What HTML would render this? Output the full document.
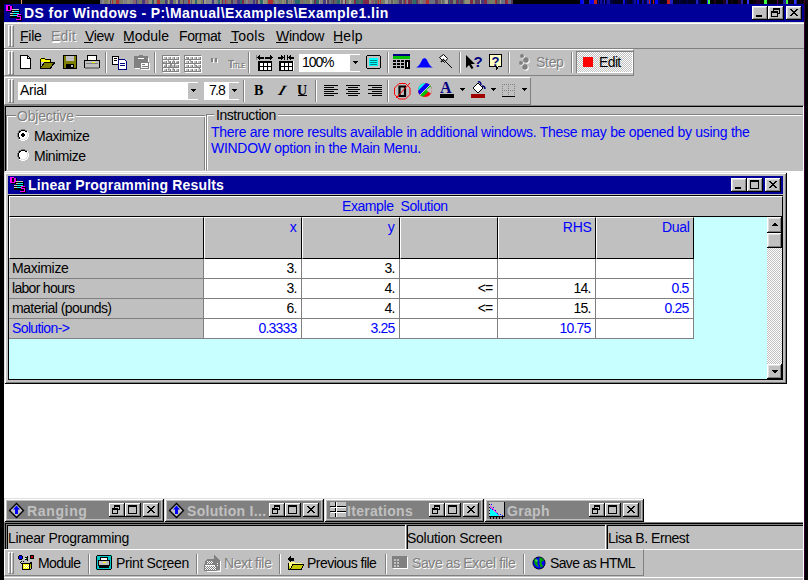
<!DOCTYPE html>
<html><head><meta charset="utf-8">
<style>
*{margin:0;padding:0;box-sizing:border-box}
html,body{width:808px;height:580px;overflow:hidden;background:#000}
body{position:relative;font-family:"Liberation Sans",sans-serif;font-size:13px;color:#000}
.a{position:absolute}
.t{position:absolute;white-space:pre;line-height:13px}
.g{background:#c0c0c0}
.btn{background:#c0c0c0;box-shadow:inset -1px -1px #000,inset 1px 1px #fff,inset -2px -2px #808080,inset 2px 2px #dfdfdf}
.grip{position:absolute;width:3px;border:1px solid;border-color:#fff #808080 #808080 #fff}
.grip::after{content:'';position:absolute;left:2px;top:-1px;bottom:-1px;width:3px;border:1px solid;border-color:#fff #808080 #808080 #fff;box-sizing:border-box}
.m{letter-spacing:0.5px}
.dis{color:#808080;text-shadow:1px 1px #fff}
.ch{position:absolute;top:217px;width:98px;height:42px;background:#c0c0c0;border-top:1px solid #fff;border-left:1px solid #fff;border-bottom:1px solid #000;border-right:1px solid #000}
.gt{position:absolute;white-space:pre;line-height:14px;font-size:14px;letter-spacing:-0.4px}
.gr{position:absolute;white-space:pre;line-height:14px;font-size:14px;letter-spacing:-0.8px;width:92.5px;text-align:right}
.mw{position:absolute;top:498px;width:160px;height:24px;background:#808080;box-shadow:inset 1px 1px #dfdfdf,inset -1px -1px #000,inset 2px 2px #fff,inset -2px -2px #808080,inset 3px 3px #c0c0c0,inset -3px -3px #c0c0c0}
.mt{color:#c0c0c0;font-weight:bold;font-size:14px;letter-spacing:0.3px}
.sp{position:absolute;top:524px;height:26px;border-top:1px solid #808080;border-left:1px solid #808080;border-bottom:1px solid #fff;border-right:1px solid #fff;box-shadow:inset 1px 1px #000}
</style></head><body>
<!-- noise strip -->
<div class="a" id="noise" style="left:100px;top:0;width:708px;height:4px;background:linear-gradient(90deg,#6a7080 0px 2px,#8a8a8a 2px 4px,#7a7a62 4px 5px,#7a7a62 5px 8px,#909078 8px 10px,#5a3a5a 10px 11px,#808080 11px 12px,#b03030 12px 13px,#7a7a62 13px 15px,#7a7a62 15px 16px,#b03030 16px 19px,#886070 19px 20px,#7a7a62 20px 23px,#8a8a8a 23px 24px,#808080 24px 27px,#909078 27px 30px,#808080 30px 32px,#808080 32px 33px,#886070 33px 36px,#483880 36px 37px,#6a7080 37px 39px,#7a7a62 39px 42px,#483880 42px 45px,#886070 45px 48px,#7a7a62 48px 49px,#909078 49px 52px,#2a6a6a 52px 53px,#5a3a5a 53px 54px,#909078 54px 55px,#909078 55px 56px,#70806a 56px 57px,#b03030 57px 60px,#70806a 60px 62px,#70806a 62px 65px,#483880 65px 67px,#606060 67px 68px,#a0a090 68px 69px,#7a7a62 69px 70px,#483880 70px 73px,#70806a 73px 76px,#a0a090 76px 78px,#483880 78px 80px,#7a7a62 80px 83px,#5a3a5a 83px 84px,#6a7080 84px 86px,#6a7080 86px 88px,#b03030 88px 90px,#8a8a8a 90px 91px,#606060 91px 92px,#909078 92px 95px,#2a6a6a 95px 97px,#909078 97px 99px,#909078 99px 101px,#7a7a62 101px 103px,#483880 103px 104px,#a0a090 104px 106px,#808080 106px 107px,#8a8a8a 107px 109px,#8a8a8a 109px 112px,#483880 112px 114px,#8a8a8a 114px 116px,#808080 116px 118px,#2a6a6a 118px 120px,#909078 120px 121px,#70806a 121px 122px,#802848 122px 123px,#6a7080 123px 125px,#b03030 125px 126px,#886070 126px 128px,#7a7a62 128px 130px,#70806a 130px 131px,#5a3a5a 131px 133px,#6a7080 133px 135px,#886070 135px 137px,#483880 137px 140px,#2a6a6a 140px 142px,#802848 142px 144px,#7a7a62 144px 145px,#6a7080 145px 146px,#8a8a8a 146px 147px,#808080 147px 148px,#886070 148px 150px,#6a7080 150px 153px,#483880 153px 155px,#6a7080 155px 156px,#5a3a5a 156px 158px,#909078 158px 160px,#2a6a6a 160px 163px,#a0a090 163px 164px,#909078 164px 167px,#70806a 167px 168px,#b03030 168px 171px,#b03030 171px 173px,#7a7a62 173px 175px,#8a8a8a 175px 177px,#808080 177px 179px,#7a7a62 179px 180px,#70806a 180px 181px,#7a7a62 181px 182px,#909078 182px 184px,#7a7a62 184px 185px,#909078 185px 186px,#5a3a5a 186px 187px,#2a6a6a 187px 188px,#808080 188px 191px,#886070 191px 192px,#909078 192px 193px,#6a7080 193px 195px,#2a6a6a 195px 197px,#2a6a6a 197px 200px,#7a7a62 200px 202px,#886070 202px 203px,#70806a 203px 205px,#70806a 205px 207px,#7a7a62 207px 209px,#7a7a62 209px 210px,#a0a090 210px 212px,#70806a 212px 214px,#5a3a5a 214px 215px,#802848 215px 216px,#2a6a6a 216px 219px,#a0a090 219px 220px,#808080 220px 223px,#483880 223px 226px,#a0a090 226px 227px,#5a3a5a 227px 229px,#6a7080 229px 231px,#606060 231px 233px,#5a3a5a 233px 234px,#606060 234px 237px,#2a6a6a 237px 240px,#909078 240px 241px,#606060 241px 242px,#886070 242px 243px,#a0a090 243px 245px,#802848 245px 246px,#70806a 246px 249px,#a0a090 249px 251px,#808080 251px 252px,#70806a 252px 254px,#802848 254px 256px,#2a6a6a 256px 259px,#606060 259px 261px,#2a6a6a 261px 263px,#802848 263px 264px,#802848 264px 265px,#802848 265px 267px,#802848 267px 269px,#909078 269px 271px,#886070 271px 274px,#70806a 274px 275px,#606060 275px 277px,#886070 277px 278px,#b03030 278px 279px,#70806a 279px 280px,#b03030 280px 281px,#7a7a62 281px 283px,#70806a 283px 285px,#a0a090 285px 287px,#a0a090 287px 288px,#6a7080 288px 289px,#808080 289px 290px,#909078 290px 291px,#606060 291px 293px,#909078 293px 294px,#70806a 294px 297px,#6a7080 297px 299px,#5a3a5a 299px 302px,#808080 302px 303px,#606060 303px 304px,#5a3a5a 304px 305px,#b03030 305px 306px,#886070 306px 307px,#808080 307px 308px,#802848 308px 310px,#5a3a5a 310px 312px,#606060 312px 313px,#2a6a6a 313px 316px,#5a3a5a 316px 318px,#886070 318px 320px,#808080 320px 321px,#70806a 321px 323px,#886070 323px 326px,#b03030 326px 329px,#6a7080 329px 332px,#6a7080 332px 335px,#5a3a5a 335px 338px,#886070 338px 339px,#606060 339px 341px,#909078 341px 342px,#606060 342px 343px,#6a7080 343px 344px,#70806a 344px 345px,#a0a090 345px 348px,#5a3a5a 348px 349px,#2a6a6a 349px 350px,#5a3a5a 350px 353px,#70806a 353px 356px,#5a3a5a 356px 357px,#802848 357px 358px,#483880 358px 359px,#606060 359px 360px,#5a3a5a 360px 361px,#5a3a5a 361px 363px,#606060 363px 364px,#70806a 364px 365px,#909078 365px 367px,#909078 367px 370px,#802848 370px 373px,#70806a 373px 375px,#5a3a5a 375px 378px,#5a3a5a 378px 380px,#a0a090 380px 381px,#483880 381px 384px,#802848 384px 387px,#6a7080 387px 389px,#7a7a62 389px 391px,#70806a 391px 393px,#7a7a62 393px 395px,#b03030 395px 396px,#802848 396px 397px,#606060 397px 399px,#606060 399px 400px,#a0a090 400px 401px,#6a7080 401px 403px,#6a7080 403px 405px,#802848 405px 407px,#b03030 407px 408px,#6a7080 408px 410px,#6a7080 410px 411px,#5a3a5a 411px 413px,#000000 413px 415px,#000000 415px 417px,#000000 417px 419px,#000000 419px 420px,#000000 420px 422px,#000000 422px 424px,#000000 424px 425px,#000000 425px 427px,#000000 427px 428px,#000000 428px 430px,#000000 430px 433px,#000000 433px 435px,#000000 435px 437px,#000000 437px 438px,#000000 438px 440px,#000000 440px 442px,#000000 442px 445px,#000000 445px 448px,#000000 448px 450px,#000000 450px 453px,#000000 453px 454px,#000000 454px 455px,#000000 455px 456px,#000000 456px 457px,#000000 457px 458px,#000000 458px 460px,#000000 460px 462px,#000000 462px 463px,#000000 463px 464px,#000000 464px 466px,#000000 466px 467px,#000000 467px 469px,#000000 469px 471px,#000000 471px 473px,#000000 473px 474px,#000000 474px 477px,#000000 477px 480px,#0000ff 480px 483px,#2020c0 483px 484px,#000030 484px 485px,#000020 485px 487px,#000020 487px 488px,#000020 488px 489px,#2020c0 489px 490px,#0000ff 490px 491px,#0000ff 491px 494px,#c02020 494px 497px,#000020 497px 498px,#1010a0 498px 499px,#000020 499px 500px,#1010a0 500px 502px,#000060 502px 504px,#2020c0 504px 505px,#000020 505px 506px,#000060 506px 507px,#1010a0 507px 510px,#000040 510px 513px,#000020 513px 514px,#000020 514px 516px,#000020 516px 519px,#000020 519px 521px,#000020 521px 523px,#2020c0 523px 524px,#0000ff 524px 525px,#000020 525px 526px,#000060 526px 527px,#000030 527px 529px,#000020 529px 530px,#000020 530px 532px,#000060 532px 534px,#1010a0 534px 536px,#000030 536px 537px,#0000ff 537px 539px,#000030 539px 542px,#1010a0 542px 544px,#000030 544px 545px,#000060 545px 547px,#2020c0 547px 548px,#2020c0 548px 549px,#c02020 549px 550px,#0000ff 550px 551px,#000020 551px 553px,#c02020 553px 554px,#000020 554px 555px,#0000ff 555px 558px,#000060 558px 560px,#000020 560px 563px,#000020 563px 564px,#000020 564px 567px,#c02020 567px 570px,#2020c0 570px 573px,#000020 573px 574px,#000020 574px 577px,#000030 577px 578px,#000020 578px 579px,#000040 579px 580px,#000030 580px 583px,#000020 583px 586px,#000040 586px 588px,#000020 588px 589px,#000020 589px 592px,#000020 592px 593px,#000020 593px 594px,#000030 594px 596px,#2020c0 596px 598px,#000060 598px 599px,#000040 599px 601px,#000000 601px 602px,#000000 602px 604px,#000000 604px 607px,#3030ff 607px 608px,#40ff40 608px 610px,#000000 610px 613px,#000000 613px 614px,#200020 614px 616px,#000000 616px 617px,#000000 617px 619px,#000000 619px 621px,#000000 621px 623px,#200020 623px 626px,#2020a0 626px 628px,#000000 628px 629px,#000000 629px 631px,#100010 631px 633px,#000000 633px 634px,#000000 634px 635px,#000000 635px 637px,#000000 637px 638px,#200020 638px 641px,#2020a0 641px 643px,#000000 643px 645px,#000000 645px 647px,#3030ff 647px 649px,#000000 649px 651px,#000000 651px 652px,#000000 652px 653px,#100010 653px 655px,#000000 655px 656px,#200020 656px 658px,#200020 658px 660px,#000000 660px 662px,#000000 662px 664px,#40ff40 664px 666px,#40ff40 666px 667px,#000000 667px 669px,#000000 669px 670px,#000000 670px 672px,#000000 672px 674px,#000000 674px 677px,#500050 677px 678px,#000000 678px 680px,#000000 680px 681px,#000000 681px 683px,#2020a0 683px 686px,#40ff40 686px 688px,#000000 688px 690px,#100010 690px 692px,#000000 692px 694px,#3030ff 694px 696px,#2020a0 696px 697px,#000000 697px 700px,#100010 700px 702px,#000000 702px 703px,#100010 703px 706px,#100010 706px 708px)"></div>
<div class="a" style="left:21px;top:0;width:1px;height:4px;background:#e0a070"></div>
<div class="a" style="left:4px;top:4px;width:800px;height:576px;background:#c0c0c0"></div>
<!-- title bar -->
<div class="a" style="left:4px;top:4px;width:800px;height:18px;background:#000098"></div>
<div class="a" style="left:4px;top:22px;width:800px;height:1px;background:#dfdfdf"></div>
<div class="t" style="left:24px;top:7px;color:#fff;font-weight:bold;font-size:14px;letter-spacing:0.42px">DS for Windows - P:\Manual\Examples\Example1.lin</div>
<!-- title icon -->
<svg class="a" style="left:5px;top:4px" width="18" height="18" viewBox="0 0 18 18" shape-rendering="crispEdges">
<g fill="#000"><rect x="2" y="2" width="6" height="6"/><rect x="8" y="6" width="7" height="2"/><rect x="7" y="8" width="8" height="2"/><rect x="5" y="10" width="10" height="2"/><rect x="5" y="12" width="8" height="2"/><rect x="12" y="11" width="5" height="6"/></g>
<g fill="#ff00ff"><rect x="1" y="1" width="4" height="1"/><rect x="1" y="1" width="2" height="6"/><rect x="1" y="6" width="5" height="1"/><rect x="5" y="2" width="2" height="4"/></g>
<g fill="#c8c8b8"><rect x="7" y="5" width="7" height="1"/><rect x="7" y="7" width="2" height="1"/><rect x="5" y="9" width="3" height="1"/><rect x="5" y="11" width="3" height="1"/></g>
<g fill="#00ffff"><rect x="9" y="7" width="5" height="1"/><rect x="8" y="9" width="6" height="1"/><rect x="8" y="11" width="4" height="1"/></g>
<g fill="#ff00ff"><rect x="12" y="10" width="4" height="1"/><rect x="12" y="10" width="1" height="3"/><rect x="12" y="12" width="4" height="1"/><rect x="15" y="12" width="1" height="4"/><rect x="11" y="15" width="5" height="1"/></g>
</svg>
<!-- title buttons -->
<div class="a btn" style="left:752px;top:6px;width:16px;height:14px"><div class="a" style="left:4px;top:9px;width:6px;height:2px;background:#000"></div></div>
<div class="a btn" style="left:768px;top:6px;width:16px;height:14px">
 <div class="a" style="left:5px;top:2px;width:7px;height:6px;border:1px solid #000;border-top-width:2px"></div>
 <div class="a" style="left:3px;top:5px;width:7px;height:6px;border:1px solid #000;border-top-width:2px;background:#c0c0c0"></div>
</div>
<div class="a btn" style="left:786px;top:6px;width:16px;height:14px">
 <svg class="a" style="left:4px;top:3px" width="8" height="7" viewBox="0 0 8 7" shape-rendering="crispEdges"><path fill="#000" d="M0 0h2v1h1v1h2v-1h1v-1h2v1h-1v1h-1v1h-1v1h1v1h1v1h1v1h-2v-1h-1v-1h-2v1h-1v1h-2v-1h1v-1h1v-1h1v-1h-1v-1h-1v-1h-1z"/></svg>
</div>
<div class="a" style="left:4px;top:22px;width:800px;height:1px;background:#dfdfdf"></div>
<!-- menu bar -->
<div class="a" style="left:4px;top:23px;width:800px;height:1px;background:#fff"></div>
<div class="a" style="left:4px;top:23px;width:1px;height:25px;background:#fff"></div>
<div class="a" style="left:4px;top:48px;width:800px;height:1px;background:#808080"></div>
<div class="grip" style="left:8px;top:25px;height:22px"></div>
<div class="t" style="left:20px;top:29px;font-size:14px;line-height:14px;letter-spacing:-0.22px">File</div>
<div class="t dis" style="left:51px;top:29px;font-size:14px;line-height:14px;letter-spacing:0.25px">Edit</div>
<div class="t" style="left:85px;top:29px;font-size:14px;line-height:14px;letter-spacing:-0.29px">View</div>
<div class="t" style="left:123px;top:29px;font-size:14px;line-height:14px;letter-spacing:0px">Module</div>
<div class="t" style="left:179px;top:29px;font-size:14px;line-height:14px;letter-spacing:-0.42px">Format</div>
<div class="t" style="left:231px;top:29px;font-size:14px;line-height:14px;letter-spacing:0.25px">Tools</div>
<div class="t" style="left:276px;top:29px;font-size:14px;line-height:14px;letter-spacing:-0.31px">Window</div>
<div class="t" style="left:333px;top:29px;font-size:14px;line-height:14px;letter-spacing:0.25px">Help</div>
<!-- underlines -->
<div class="a" style="left:20px;top:42px;width:8px;height:1px;background:#000"></div>
<div class="a" style="left:52px;top:42px;width:8px;height:1px;background:#fff"></div>
<div class="a" style="left:84px;top:42px;width:9px;height:1px;background:#000"></div>
<div class="a" style="left:124px;top:42px;width:11px;height:1px;background:#000"></div>
<div class="a" style="left:197px;top:42px;width:5px;height:1px;background:#000"></div>
<div class="a" style="left:230px;top:42px;width:8px;height:1px;background:#000"></div>
<div class="a" style="left:276px;top:42px;width:12px;height:1px;background:#000"></div>
<div class="a" style="left:334px;top:42px;width:9px;height:1px;background:#000"></div>
<!-- toolbar 1 -->
<div class="a" style="left:4px;top:49px;width:630px;height:27px;border-top:1px solid #fff;border-left:1px solid #fff;border-right:1px solid #808080;border-bottom:1px solid #808080"></div>
<div class="grip" style="left:8px;top:51px;height:24px"></div>
<svg class="a" style="left:0;top:49px" width="640" height="27" viewBox="0 49 640 27" shape-rendering="crispEdges">
 <!-- new -->
 <path d="M20.5 55.5h7l3 3v9.5h-10z" fill="#fff" stroke="#000"/>
 <path d="M27.5 55.5v3h3" fill="none" stroke="#000"/>
 <!-- open -->
 <path d="M40 58h5l1 1h5v3h-11z" fill="#ffff00" stroke="#000" stroke-width="0"/>
 <path d="M40.5 58.5h4l1 1h5v2.5" fill="none" stroke="#000"/>
 <path d="M40.5 58.5v9.5h10l4.5-6h-10l-4.5 6" fill="#808000" stroke="#000"/>
 <!-- save -->
 <rect x="63.5" y="55.5" width="13" height="13" fill="#808000" stroke="#000"/>
 <rect x="66" y="56" width="8" height="5" fill="#c0c0c0"/>
 <rect x="66" y="64" width="8" height="4" fill="#000"/>
 <rect x="71" y="65" width="2" height="2" fill="#c0c0c0"/>
 <!-- print -->
 <path d="M87.5 55.5h9v5h-9z" fill="#fff" stroke="#000"/>
 <path d="M84.5 60.5h15v7h-15z" fill="#c0c0c0" stroke="#000"/>
 <rect x="86" y="63" width="12" height="1" fill="#808080"/>
 <rect x="92" y="62" width="3" height="1" fill="#ffff00"/>
 <rect x="85" y="67" width="14" height="2" fill="#808080"/>
 <!-- sep -->
 <rect x="105" y="52" width="1" height="21" fill="#808080"/><rect x="106" y="52" width="1" height="21" fill="#fff"/>
 <!-- copy -->
 <path d="M112.5 56.5h6v8h-6z" fill="#fff" stroke="#000"/>
 <rect x="114" y="58" width="3" height="1" fill="#000"/><rect x="114" y="60" width="3" height="1" fill="#000"/>
 <path d="M118.5 59.5h6l2 2v7.5h-8z" fill="#fff" stroke="#000080"/>
 <rect x="120" y="63" width="5" height="1" fill="#000080"/><rect x="120" y="65" width="5" height="1" fill="#000080"/>
 <!-- paste disabled -->
 <rect x="134" y="56" width="14" height="12" fill="#808080"/>
 <rect x="139" y="55" width="4" height="1" fill="#808080"/>
 <rect x="138" y="58" width="6" height="1" fill="#fff"/>
 <rect x="148" y="58" width="1" height="4" fill="#fff"/><rect x="135" y="68" width="5" height="1" fill="#fff"/>
 <rect x="140" y="62" width="9" height="7" fill="#808080"/>
 <rect x="141" y="63" width="7" height="5" fill="#fff"/>
 <rect x="142" y="64" width="3" height="1" fill="#808080"/><rect x="142" y="66" width="6" height="1" fill="#808080"/>
 <rect x="149" y="63" width="1" height="7" fill="#fff"/><rect x="141" y="69" width="9" height="1" fill="#fff"/>
 <!-- sep -->
 <rect x="154" y="52" width="1" height="21" fill="#808080"/><rect x="155" y="52" width="1" height="21" fill="#fff"/>
 <!-- grid dis -->
 <g><rect x="162" y="55" width="1" height="16" fill="#808080"/><rect x="163" y="56" width="1" height="16" fill="#fff"/><rect x="166" y="55" width="1" height="16" fill="#808080"/><rect x="167" y="56" width="1" height="16" fill="#fff"/><rect x="170" y="55" width="1" height="16" fill="#808080"/><rect x="171" y="56" width="1" height="16" fill="#fff"/><rect x="174" y="55" width="1" height="16" fill="#808080"/><rect x="175" y="56" width="1" height="16" fill="#fff"/><rect x="178" y="55" width="1" height="16" fill="#808080"/><rect x="179" y="56" width="1" height="16" fill="#fff"/><rect x="162" y="55" width="17" height="1" fill="#808080"/><rect x="163" y="56" width="17" height="1" fill="#fff"/><rect x="162" y="59" width="17" height="1" fill="#808080"/><rect x="163" y="60" width="17" height="1" fill="#fff"/><rect x="162" y="63" width="17" height="1" fill="#808080"/><rect x="163" y="64" width="17" height="1" fill="#fff"/><rect x="162" y="67" width="17" height="1" fill="#808080"/><rect x="163" y="68" width="17" height="1" fill="#fff"/><rect x="162" y="71" width="17" height="1" fill="#808080"/><rect x="163" y="72" width="17" height="1" fill="#fff"/><rect x="184" y="55" width="1" height="16" fill="#808080"/><rect x="185" y="56" width="1" height="16" fill="#fff"/><rect x="188" y="55" width="1" height="16" fill="#808080"/><rect x="189" y="56" width="1" height="16" fill="#fff"/><rect x="192" y="55" width="1" height="16" fill="#808080"/><rect x="193" y="56" width="1" height="16" fill="#fff"/><rect x="196" y="55" width="1" height="16" fill="#808080"/><rect x="197" y="56" width="1" height="16" fill="#fff"/><rect x="200" y="55" width="1" height="16" fill="#808080"/><rect x="201" y="56" width="1" height="16" fill="#fff"/><rect x="184" y="55" width="17" height="1" fill="#808080"/><rect x="185" y="56" width="17" height="1" fill="#fff"/><rect x="184" y="59" width="17" height="1" fill="#808080"/><rect x="185" y="60" width="17" height="1" fill="#fff"/><rect x="184" y="63" width="17" height="1" fill="#808080"/><rect x="185" y="64" width="17" height="1" fill="#fff"/><rect x="184" y="67" width="17" height="1" fill="#808080"/><rect x="185" y="68" width="17" height="1" fill="#fff"/><rect x="184" y="71" width="17" height="1" fill="#808080"/><rect x="185" y="72" width="17" height="1" fill="#fff"/><path d="M163 62l4 3-4 3M178 62l-4 3 4 3M168 60l3 5 3-5M168 70l3-5 3 5" stroke="#808080" fill="none" shape-rendering="auto"/><path d="M186 57l14 12" stroke="#808080" fill="none" shape-rendering="auto"/></g>
 <!-- quotes -->
 <g fill="#808080"><rect x="211" y="58" width="2" height="4"/><rect x="215" y="58" width="2" height="4"/></g>
 <g fill="#fff"><rect x="213" y="59" width="1" height="4"/><rect x="217" y="59" width="1" height="4"/></g>
 
 <text x="229" y="69" font-family="Liberation Sans" font-weight="bold" font-size="10" fill="#fff" textLength="6" lengthAdjust="spacingAndGlyphs">T</text><text x="234" y="69" font-family="Liberation Sans" font-weight="bold" font-size="7.5" fill="#fff" textLength="12" lengthAdjust="spacingAndGlyphs">ITLE</text><text x="228" y="68" font-family="Liberation Sans" font-weight="bold" font-size="10" fill="#808080" textLength="6" lengthAdjust="spacingAndGlyphs">T</text><text x="233" y="68" font-family="Liberation Sans" font-weight="bold" font-size="7.5" fill="#808080" textLength="12" lengthAdjust="spacingAndGlyphs">ITLE</text>
 <!-- sep -->
 <rect x="248" y="52" width="1" height="21" fill="#808080"/><rect x="249" y="52" width="1" height="21" fill="#fff"/>
 <!-- grid arrows out -->
 <g fill="#000"><rect x="257" y="57" width="1" height="1"/><rect x="258" y="56" width="1" height="3"/><rect x="259" y="55" width="1" height="5"/><rect x="260" y="57" width="4" height="1.6"/><rect x="265" y="57" width="5" height="1.6"/><rect x="270" y="55" width="1" height="5"/><rect x="271" y="56" width="1" height="3"/><rect x="272" y="57" width="1" height="1"/><rect x="256" y="55" width="1" height="5" fill="#808080"/></g>
 <rect x="258" y="61" width="14" height="10" fill="#000"/><rect x="260" y="63" width="3" height="3" fill="#fff"/><rect x="260" y="67" width="3" height="3" fill="#fff"/><rect x="264" y="63" width="3" height="3" fill="#fff"/><rect x="264" y="67" width="3" height="3" fill="#fff"/><rect x="268" y="63" width="3" height="3" fill="#fff"/><rect x="268" y="67" width="3" height="3" fill="#fff"/>
 <!-- grid arrows in -->
 <g fill="#000"><rect x="278" y="57" width="3" height="1.6"/><rect x="281" y="55" width="1" height="5"/><rect x="282" y="56" width="1" height="3"/><rect x="283" y="57" width="1" height="1"/><rect x="284" y="55" width="1" height="5"/><rect x="287" y="55" width="1" height="5"/><rect x="288" y="57" width="1" height="1"/><rect x="289" y="56" width="1" height="3"/><rect x="290" y="55" width="1" height="5"/><rect x="291" y="57" width="3" height="1.6"/></g>
 <rect x="279" y="61" width="14" height="10" fill="#000"/><rect x="281" y="63" width="3" height="3" fill="#fff"/><rect x="281" y="67" width="3" height="3" fill="#fff"/><rect x="285" y="63" width="3" height="3" fill="#fff"/><rect x="285" y="67" width="3" height="3" fill="#fff"/><rect x="289" y="63" width="3" height="3" fill="#fff"/><rect x="289" y="67" width="3" height="3" fill="#fff"/><rect x="293" y="61" width="1" height="10" fill="#fff"/>
 <!-- combo 100% -->
 <rect x="299" y="54" width="61" height="18" fill="#fff"/>
 <rect x="350" y="55" width="10" height="16" fill="#c0c0c0"/>
 <path d="M352 61h6l-3 3z" fill="#000"/>
 <!-- monitor -->
 <rect x="366.5" y="55.5" width="14" height="13" rx="2" fill="#c0c0c0" stroke="#000"/>
 <rect x="369" y="58" width="9" height="8" fill="#00ffff" stroke="#000080" stroke-width="0"/>
 <g fill="#008080"><rect x="370" y="60" width="7" height="1"/><rect x="370" y="62" width="7" height="1"/><rect x="370" y="64" width="7" height="1"/></g>
 <!-- sep -->
 <rect x="387" y="52" width="1" height="21" fill="#808080"/><rect x="388" y="52" width="1" height="21" fill="#fff"/>
 <!-- calculator -->
 <rect x="393" y="54" width="17" height="2" fill="#000080"/>
 <rect x="393" y="56" width="17" height="3" fill="#00c000"/>
 <g fill="#000"><rect x="393" y="60" width="3" height="2"/><rect x="397" y="60" width="3" height="2"/><rect x="401" y="60" width="3" height="2"/><rect x="393" y="63" width="3" height="2"/><rect x="397" y="63" width="3" height="2"/><rect x="401" y="63" width="3" height="2"/><rect x="393" y="66" width="3" height="2"/><rect x="397" y="66" width="3" height="2"/><rect x="401" y="66" width="3" height="2"/><rect x="405" y="60" width="5" height="9"/></g>
 <rect x="407" y="62" width="1" height="5" fill="#fff"/>
 <!-- bell -->
 <path d="M416 67.5L433 67.5C430 66.5 428.5 63 427 60C426 57.5 423 57.5 422 60C420.5 63 419 66.5 416 67.5z" fill="#0000ff" shape-rendering="auto"/>
 <!-- pushpin -->
 <path d="M439.5 57.5l4-3 4 4-3 4z" fill="#fff" stroke="#000" shape-rendering="auto"/>
 <path d="M444 60l8 8" stroke="#000" shape-rendering="auto"/>
 <path d="M441 62l3-3" stroke="#000" stroke-width="1.5" shape-rendering="auto"/>
 <!-- sep -->
 <rect x="459" y="52" width="1" height="21" fill="#808080"/><rect x="460" y="52" width="1" height="21" fill="#fff"/>
 <!-- arrow ? -->
 <path d="M466 55v13l3-3 2.5 4 2-1-2.5-4h4z" fill="#000" shape-rendering="auto"/>
 <text x="473.5" y="67" font-family="Liberation Sans" font-weight="bold" font-size="15" fill="#000080">?</text>
 <!-- help bubble -->
 <path d="M489.5 54.5h12v12h-3l-2 3v-3h-7z" fill="#ffffc0" stroke="#000"/>
 <text x="491.5" y="65.5" font-family="Liberation Sans" font-weight="bold" font-size="13" fill="#000080">?</text>
 <!-- sep -->
 <rect x="508" y="52" width="1" height="21" fill="#808080"/><rect x="509" y="52" width="1" height="21" fill="#fff"/>
 <!-- step icon -->
 <g fill="#fff" shape-rendering="auto"><circle cx="522.8" cy="56.8" r="2"/><circle cx="527" cy="61" r="2.7"/><circle cx="521.8" cy="63.8" r="2"/><circle cx="526" cy="68" r="2.7"/></g><g fill="#808080" shape-rendering="auto"><circle cx="522" cy="56" r="2"/><circle cx="526" cy="60" r="2.7"/><circle cx="521" cy="63" r="2"/><circle cx="525" cy="67" r="2.7"/></g>
 <!-- sep -->
 <rect x="571" y="52" width="1" height="21" fill="#808080"/><rect x="572" y="52" width="1" height="21" fill="#fff"/>
</svg>

<div class="t" style="left:302px;top:55px;font-size:14px;line-height:14px;letter-spacing:-1.08px">100%</div>
<div class="t dis" style="left:536px;top:55px;font-size:14px;line-height:14px;letter-spacing:-0.3px">Step</div>
<div class="a" style="left:576px;top:51px;width:57px;height:22px;background-color:#c0c0c0;background-image:repeating-conic-gradient(#fff 0 25%,#c0c0c0 0 50%);background-size:2px 2px;box-shadow:inset 1px 1px #808080,inset -1px -1px #fff"></div>
<div class="a" style="left:583px;top:57px;width:10px;height:10px;background:#ff0000"></div>
<div class="t" style="left:599px;top:55px;font-size:14px;line-height:14px;letter-spacing:-0.62px">Edit</div>
<!-- toolbar 2 -->
<div class="a" style="left:4px;top:77px;width:527px;height:28px;border-top:1px solid #fff;border-left:1px solid #fff;border-right:1px solid #808080;border-bottom:1px solid #808080"></div>
<div class="grip" style="left:8px;top:79px;height:24px"></div>
<div class="a" style="left:18px;top:82px;width:180px;height:18px;background:#fff"></div>
<div class="a" style="left:188px;top:83px;width:10px;height:16px;background:#c0c0c0"></div>
<div class="a" style="left:204px;top:82px;width:35px;height:18px;background:#fff"></div>
<div class="a" style="left:229px;top:83px;width:10px;height:16px;background:#c0c0c0"></div>
<div class="t" style="left:20px;top:83px;font-size:14px;line-height:14px;letter-spacing:-0.26px">Arial</div>
<div class="t" style="left:209px;top:83px;font-size:14px;line-height:14px">7</div><div class="t" style="left:215px;top:83px;font-size:14px;line-height:14px">.</div><div class="t" style="left:218px;top:83px;font-size:14px;line-height:14px">8</div>
<svg class="a" style="left:0;top:77px" width="540" height="28" viewBox="0 77 540 28" shape-rendering="crispEdges">
 <path d="M190 89h6l-3 3z" fill="#000"/><path d="M231 89h6l-3 3z" fill="#000"/>
 <rect x="243" y="80" width="1" height="22" fill="#808080"/><rect x="244" y="80" width="1" height="22" fill="#fff"/>
 <rect x="315" y="80" width="1" height="22" fill="#808080"/><rect x="316" y="80" width="1" height="22" fill="#fff"/>
 <g fill="#000">
  <rect x="324" y="85" width="14" height="1"/><rect x="324" y="87" width="10" height="1"/><rect x="324" y="89" width="14" height="1"/><rect x="324" y="91" width="10" height="1"/><rect x="324" y="93" width="14" height="1"/><rect x="324" y="95" width="10" height="1"/>
  <rect x="346" y="85" width="14" height="1"/><rect x="348" y="87" width="10" height="1"/><rect x="346" y="89" width="14" height="1"/><rect x="348" y="91" width="10" height="1"/><rect x="346" y="93" width="14" height="1"/><rect x="348" y="95" width="10" height="1"/>
  <rect x="368" y="85" width="14" height="1"/><rect x="372" y="87" width="10" height="1"/><rect x="368" y="89" width="14" height="1"/><rect x="372" y="91" width="10" height="1"/><rect x="368" y="93" width="14" height="1"/><rect x="372" y="95" width="10" height="1"/>
 </g>
 <rect x="387" y="80" width="1" height="22" fill="#808080"/><rect x="388" y="80" width="1" height="22" fill="#fff"/>
 <!-- no sign -->
 <path d="M399 83.5h6.5l4.5 4.5v6.5l-4.5 4.5h-6.5l-4.5-4.5v-6.5z" fill="none" stroke="#ff0000" stroke-width="1" shape-rendering="auto"/>
 <path d="M399.5 86.5h5.5v9.5h-5.5z" fill="none" stroke="#000" stroke-width="2.2" shape-rendering="auto"/>
 <path d="M396 98l14-15" stroke="#ff0000" stroke-width="1" shape-rendering="auto"/>
 <!-- color wheel -->
 <defs><clipPath id="cw"><circle cx="425" cy="90" r="7"/></clipPath></defs>
 <g clip-path="url(#cw)" shape-rendering="auto">
  <rect x="416" y="81" width="18" height="18" fill="#ff0000"/>
  <path d="M416 81h12l-12 12z" fill="#00ffff"/>
  <path d="M428 81h6l-18 18v-6z" fill="#0000ff"/>
  <path d="M434 81v5l-13 13h-5z" fill="#00c000"/>
  <path d="M434 81l-18 18" stroke="#fff" stroke-width="0.7"/>
  <path d="M434 84l-8 6 8 6z" fill="#c0c0c0"/>
 </g>
 <!-- font color A -->
 <text x="440" y="93" font-family="Liberation Serif" font-weight="bold" font-size="16" fill="#000080">A</text>
 <rect x="440" y="94" width="14" height="4" fill="#000"/>
 <path d="M460 88h5l-2.5 3z" fill="#000"/>
 <!-- bucket -->
 <path d="M473 88l5-5 5 5-5 5z" fill="#fff" stroke="#000" shape-rendering="auto"/>
 <path d="M478 82c2-1 3 1 3 3M482 86c2 0 3 1 3 3" stroke="#000080" stroke-width="1.5" fill="none" shape-rendering="auto"/>
 <rect x="471" y="94" width="14" height="4" fill="#a00000"/>
 <path d="M491 88h5l-2.5 3z" fill="#000"/>
 <!-- borders -->
 <g fill="#808080">
  <rect x="502" y="84" width="1" height="1"/><rect x="504" y="84" width="1" height="1"/><rect x="506" y="84" width="1" height="1"/><rect x="508" y="84" width="1" height="1"/><rect x="510" y="84" width="1" height="1"/><rect x="512" y="84" width="1" height="1"/><rect x="514" y="84" width="1" height="1"/>
  <rect x="502" y="90" width="1" height="1"/><rect x="504" y="90" width="1" height="1"/><rect x="506" y="90" width="1" height="1"/><rect x="508" y="90" width="1" height="1"/><rect x="510" y="90" width="1" height="1"/><rect x="512" y="90" width="1" height="1"/><rect x="514" y="90" width="1" height="1"/>
  <rect x="502" y="86" width="1" height="1"/><rect x="502" y="88" width="1" height="1"/><rect x="502" y="92" width="1" height="1"/><rect x="502" y="94" width="1" height="1"/>
  <rect x="508" y="86" width="1" height="1"/><rect x="508" y="88" width="1" height="1"/><rect x="508" y="92" width="1" height="1"/><rect x="508" y="94" width="1" height="1"/>
  <rect x="514" y="86" width="1" height="1"/><rect x="514" y="88" width="1" height="1"/><rect x="514" y="92" width="1" height="1"/><rect x="514" y="94" width="1" height="1"/>
 </g>
 <rect x="502" y="96" width="13" height="1" fill="#000"/>
 <path d="M522 88h5l-2.5 3z" fill="#000"/>
</svg>
<div class="t" style="left:254px;top:84px;font-family:'Liberation Serif';font-weight:bold;font-size:14px">B</div>
<div class="t" style="left:277px;top:84px;font-family:'Liberation Serif';font-weight:bold;font-size:14px;transform:skewX(-30deg);transform-origin:0 11px">I</div>
<div class="t" style="left:297px;top:84px;font-family:'Liberation Serif';font-weight:bold;font-size:14px">U</div>
<div class="a" style="left:298px;top:95px;width:9px;height:1px;background:#000"></div>
<!-- bottom of toolbar area -->
<div class="a" style="left:4px;top:105px;width:800px;height:1px;background:#808080"></div>
<div class="a" style="left:4px;top:106px;width:800px;height:1px;background:#000"></div>
<!-- objective panel -->
<div class="a" style="left:4px;top:105px;width:800px;height:67px;background:#c0c0c0;border-top:1px solid #808080;border-left:1px solid #808080;border-right:1px solid #fff;border-bottom:1px solid #fff;box-shadow:inset 1px 1px #000"></div>
<div class="a" style="left:6px;top:115px;width:200px;height:56px;border:1px solid;border-color:#808080 #fff transparent #808080;box-shadow:inset 1px 1px #fff,inset -1px 0 #808080"></div>
<div class="t dis" style="left:18px;top:109px;font-size:14px;line-height:14px;letter-spacing:-0.18px;background:#c0c0c0;padding:0 2px 0 1px;margin-left:-2px">Objective</div>
<div class="a" style="left:206px;top:114px;width:597px;height:57px;border:1px solid;border-color:#808080 transparent transparent #808080;box-shadow:inset 1px 1px #fff"></div>
<div class="t" style="left:214px;top:108px;font-size:14px;line-height:14px;background:#c0c0c0;padding:0 2px;letter-spacing:-0.44px">Instruction</div>
<svg class="a" style="left:17px;top:129px" width="13" height="32" viewBox="0 0 13 32" shape-rendering="crispEdges">
 <defs><linearGradient id="rg1" x1="0" y1="0" x2="1" y2="1"><stop offset="0.5" stop-color="#808080"/><stop offset="0.5" stop-color="#fff"/></linearGradient>
 <linearGradient id="rg2" x1="0" y1="0" x2="1" y2="1"><stop offset="0.5" stop-color="#000"/><stop offset="0.5" stop-color="#dfdfdf"/></linearGradient>
 </defs>
 <g transform="translate(0 0)"><circle cx="6" cy="6" r="6" fill="url(#rg1)"/><circle cx="6" cy="6" r="5" fill="url(#rg2)"/><circle cx="6" cy="6" r="4" fill="#fff"/></g><g transform="translate(0 20)"><circle cx="6" cy="6" r="6" fill="url(#rg1)"/><circle cx="6" cy="6" r="5" fill="url(#rg2)"/><circle cx="6" cy="6" r="4" fill="#fff"/></g>
 <rect x="5" y="4" width="2" height="4" fill="#000"/><rect x="4" y="5" width="4" height="2" fill="#000"/>
</svg>
<div class="t" style="left:34px;top:129px;font-size:14px;line-height:14px;letter-spacing:-0.46px">Maximize</div>
<div class="t" style="left:34px;top:149px;font-size:14px;line-height:14px;letter-spacing:-0.46px">Minimize</div>
<div class="t" style="left:211px;top:124px;color:#0000ff;font-size:14px;letter-spacing:-0.28px;line-height:16px">There are more results available in additional windows. These may be opened by using the<br>WINDOW option in the Main Menu.</div>
<!-- MDI client -->
<div class="a" style="left:4px;top:172px;width:800px;height:350px;background:#fff"></div>
<!-- child window -->
<div class="a" style="left:4px;top:172px;width:783px;height:212px;background:#c0c0c0;box-shadow:inset 1px 1px #dfdfdf,inset -1px -1px #000,inset 2px 2px #fff,inset -2px -2px #808080"></div>
<div class="a" style="left:8px;top:176px;width:775px;height:18px;background:#000098"></div>
<svg class="a" style="left:9px;top:176px" width="18" height="18" viewBox="0 0 18 18" shape-rendering="crispEdges">
<g fill="#000"><rect x="2" y="2" width="6" height="6"/><rect x="8" y="6" width="7" height="2"/><rect x="7" y="8" width="8" height="2"/><rect x="5" y="10" width="10" height="2"/><rect x="5" y="12" width="8" height="2"/><rect x="12" y="11" width="5" height="6"/></g>
<g fill="#ff00ff"><rect x="1" y="1" width="4" height="1"/><rect x="1" y="1" width="2" height="6"/><rect x="1" y="6" width="5" height="1"/><rect x="5" y="2" width="2" height="4"/></g>
<g fill="#c8c8b8"><rect x="7" y="5" width="7" height="1"/><rect x="7" y="7" width="2" height="1"/><rect x="5" y="9" width="3" height="1"/><rect x="5" y="11" width="3" height="1"/></g>
<g fill="#00ffff"><rect x="9" y="7" width="5" height="1"/><rect x="8" y="9" width="6" height="1"/><rect x="8" y="11" width="4" height="1"/></g>
<g fill="#ff00ff"><rect x="12" y="10" width="4" height="1"/><rect x="12" y="10" width="1" height="3"/><rect x="12" y="12" width="4" height="1"/><rect x="15" y="12" width="1" height="4"/><rect x="11" y="15" width="5" height="1"/></g>
</svg>
<div class="t" style="left:28px;top:179px;color:#fff;font-weight:bold;font-size:14px;letter-spacing:0.18px">Linear Programming Results</div>
<div class="a btn" style="left:731px;top:178px;width:16px;height:14px"><div class="a" style="left:4px;top:9px;width:6px;height:2px;background:#000"></div></div>
<div class="a btn" style="left:747px;top:178px;width:16px;height:14px"><div class="a" style="left:3px;top:2px;width:9px;height:9px;border:1px solid #000;border-top-width:2px"></div></div>
<div class="a btn" style="left:765px;top:178px;width:16px;height:14px">
 <svg class="a" style="left:4px;top:3px" width="8" height="7" viewBox="0 0 8 7" shape-rendering="crispEdges"><path fill="#000" d="M0 0h2v1h1v1h2v-1h1v-1h2v1h-1v1h-1v1h-1v1h1v1h1v1h1v1h-2v-1h-1v-1h-2v1h-1v1h-2v-1h1v-1h1v-1h1v-1h-1v-1h-1v-1h-1z"/></svg>
</div>
<!-- client area -->
<div class="a" style="left:8px;top:195px;width:775px;height:185px;background:#c8ffff;border:1px solid #000"></div>
<!-- header row -->
<div class="a" style="left:9px;top:196px;width:774px;height:21px;background:#c0c0c0;border-top:1px solid #fff;border-left:1px solid #fff;border-bottom:1px solid #000;border-right:1px solid #000"></div>
<div class="t" style="left:342px;top:199px;color:#0000ff;font-size:14px;line-height:14px;letter-spacing:-0.42px">Example  Solution</div>
<!-- column headers -->
<div class="a" style="left:9px;top:217px;width:195px;height:42px;background:#c0c0c0;border-top:1px solid #fff;border-left:1px solid #fff;border-bottom:1px solid #000;border-right:1px solid #000"></div>
<div class="a ch" style="left:204px"></div>
<div class="a ch" style="left:302px"></div>
<div class="a ch" style="left:400px"></div>
<div class="a ch" style="left:498px"></div>
<div class="a ch" style="left:596px"></div>
<!-- data -->
<div class="a" style="left:9px;top:259px;width:685px;height:80px;background:#fff"></div>
<div class="a" style="left:9px;top:259px;width:195px;height:80px;background:#c0c0c0"></div>
<div class="a" style="left:9px;top:278px;width:685px;height:1px;background:#808080"></div>
<div class="a" style="left:9px;top:298px;width:685px;height:1px;background:#808080"></div>
<div class="a" style="left:9px;top:318px;width:685px;height:1px;background:#808080"></div>
<div class="a" style="left:9px;top:338px;width:685px;height:1px;background:#808080"></div>
<div class="a" style="left:203px;top:259px;width:1px;height:80px;background:#808080"></div>
<div class="a" style="left:301px;top:259px;width:1px;height:80px;background:#808080"></div>
<div class="a" style="left:399px;top:259px;width:1px;height:80px;background:#808080"></div>
<div class="a" style="left:497px;top:259px;width:1px;height:80px;background:#808080"></div>
<div class="a" style="left:595px;top:259px;width:1px;height:80px;background:#808080"></div>
<div class="a" style="left:693px;top:259px;width:1px;height:80px;background:#808080"></div>
<div class="gt" style="left:12px;top:261px;letter-spacing:-0.32px">Maximize</div>
<div class="gt" style="left:12px;top:281px;letter-spacing:-0.7px">labor hours</div>
<div class="gt" style="left:12px;top:301px;letter-spacing:-0.56px">material (pounds)</div>
<div class="gt" style="left:12px;top:321px;color:#0000ff;letter-spacing:-0.62px">Solution-&gt;</div>
<div class="gr" style="left:204px;top:220px;color:#0000ff;letter-spacing:-0.3px">x</div>
<div class="gr" style="left:302px;top:220px;color:#0000ff;letter-spacing:-0.3px">y</div>
<div class="gr" style="left:498px;top:220px;color:#0000ff;letter-spacing:-0.3px;width:93.5px">RHS</div>
<div class="gr" style="left:596px;top:220px;color:#0000ff;letter-spacing:-0.3px;width:93.5px">Dual</div>
<div class="gr" style="left:204px;top:261px">3.</div>
<div class="gr" style="left:302px;top:261px">3.</div>
<div class="gr" style="left:204px;top:281px">3.</div>
<div class="gr" style="left:302px;top:281px">4.</div>
<div class="gr" style="left:400px;top:281px">&lt;=</div>
<div class="gr" style="left:498px;top:281px">14.</div>
<div class="gr" style="left:596px;top:281px;color:#0000ff">0.5</div>
<div class="gr" style="left:204px;top:301px">6.</div>
<div class="gr" style="left:302px;top:301px">4.</div>
<div class="gr" style="left:400px;top:301px">&lt;=</div>
<div class="gr" style="left:498px;top:301px">15.</div>
<div class="gr" style="left:596px;top:301px;color:#0000ff">0.25</div>
<div class="gr" style="left:204px;top:321px;color:#0000ff">0.3333</div>
<div class="gr" style="left:302px;top:321px;color:#0000ff">3.25</div>
<div class="gr" style="left:498px;top:321px;color:#0000ff">10.75</div>
<!-- scrollbar -->
<div class="a" style="left:767px;top:217px;width:15px;height:162px;background-color:#c0c0c0;background-image:repeating-conic-gradient(#fff 0 25%,#c0c0c0 0 50%);background-size:2px 2px"></div>
<div class="a btn" style="left:767px;top:217px;width:15px;height:16px"></div>
<div class="a btn" style="left:767px;top:233px;width:15px;height:15px"></div>
<div class="a btn" style="left:767px;top:364px;width:15px;height:15px"></div>
<svg class="a" style="left:767px;top:217px" width="15" height="163" shape-rendering="crispEdges"><path d="M4 9h7l-3.5-3.5z" fill="#000"/><path d="M4 153h7l-3.5 3.5z" fill="#000"/></svg>
<!-- minimized windows -->
<div class="mw" style="left:4px"></div>
<div class="mw" style="left:164px"></div>
<div class="mw" style="left:324px"></div>
<div class="mw" style="left:484px"></div>
<svg class="a" style="left:0;top:498px" width="808" height="24" viewBox="0 498 808 24" shape-rendering="crispEdges">
 <defs>
  
  
  
 </defs>
 <g transform="translate(9 502)"><path d="M7.5 1.5l7 7-7 7-7-7z" fill="#c0c0c0" stroke="#000" stroke-width="1.4" shape-rendering="auto"/><path d="M7.5 3.5l3.5 4h-2v4.5h-3v-4.5h-2z" fill="#0000ff" shape-rendering="auto"/></g>
 <g transform="translate(169 502)"><path d="M7.5 1.5l7 7-7 7-7-7z" fill="#c0c0c0" stroke="#000" stroke-width="1.4" shape-rendering="auto"/><path d="M7.5 3.5l3.5 4h-2v4.5h-3v-4.5h-2z" fill="#0000ff" shape-rendering="auto"/></g>
 <g transform="translate(109 503)">
   <g transform="translate(0 0)">
   <rect x="0" y="0" width="16" height="14" fill="#c0c0c0"/>
   <rect x="0" y="0" width="15" height="1" fill="#fff"/><rect x="0" y="0" width="1" height="13" fill="#fff"/>
   <rect x="15" y="0" width="1" height="14" fill="#000"/><rect x="0" y="13" width="16" height="1" fill="#000"/>
   <rect x="14" y="1" width="1" height="12" fill="#808080"/><rect x="1" y="12" width="14" height="1" fill="#808080"/>
  </g><g transform="translate(16 0)">
   <rect x="0" y="0" width="16" height="14" fill="#c0c0c0"/>
   <rect x="0" y="0" width="15" height="1" fill="#fff"/><rect x="0" y="0" width="1" height="13" fill="#fff"/>
   <rect x="15" y="0" width="1" height="14" fill="#000"/><rect x="0" y="13" width="16" height="1" fill="#000"/>
   <rect x="14" y="1" width="1" height="12" fill="#808080"/><rect x="1" y="12" width="14" height="1" fill="#808080"/>
  </g><g transform="translate(34 0)">
   <rect x="0" y="0" width="16" height="14" fill="#c0c0c0"/>
   <rect x="0" y="0" width="15" height="1" fill="#fff"/><rect x="0" y="0" width="1" height="13" fill="#fff"/>
   <rect x="15" y="0" width="1" height="14" fill="#000"/><rect x="0" y="13" width="16" height="1" fill="#000"/>
   <rect x="14" y="1" width="1" height="12" fill="#808080"/><rect x="1" y="12" width="14" height="1" fill="#808080"/>
  </g>
   <rect x="5" y="2" width="6" height="2" fill="#000"/><rect x="5" y="2" width="1" height="4" fill="#000"/><rect x="10" y="2" width="1" height="5" fill="#000"/><rect x="9" y="6" width="2" height="1" fill="#000"/>
   <rect x="3" y="5" width="6" height="2" fill="#000"/><rect x="3" y="5" width="1" height="6" fill="#000"/><rect x="8" y="5" width="1" height="6" fill="#000"/><rect x="3" y="10" width="6" height="1" fill="#000"/>
   <rect x="19" y="2" width="9" height="2" fill="#000"/><rect x="19" y="2" width="1" height="9" fill="#000"/><rect x="27" y="2" width="1" height="9" fill="#000"/><rect x="19" y="10" width="9" height="1" fill="#000"/>
   <path fill="#000" d="M38 3h2v1h1v1h2v-1h1v-1h2v1h-1v1h-1v1h-1v1h1v1h1v1h1v1h-2v-1h-1v-1h-2v1h-1v1h-2v-1h1v-1h1v-1h1v-1h-1v-1h-1v-1h-1z"/>
  </g>
 <g transform="translate(269 503)">
   <g transform="translate(0 0)">
   <rect x="0" y="0" width="16" height="14" fill="#c0c0c0"/>
   <rect x="0" y="0" width="15" height="1" fill="#fff"/><rect x="0" y="0" width="1" height="13" fill="#fff"/>
   <rect x="15" y="0" width="1" height="14" fill="#000"/><rect x="0" y="13" width="16" height="1" fill="#000"/>
   <rect x="14" y="1" width="1" height="12" fill="#808080"/><rect x="1" y="12" width="14" height="1" fill="#808080"/>
  </g><g transform="translate(16 0)">
   <rect x="0" y="0" width="16" height="14" fill="#c0c0c0"/>
   <rect x="0" y="0" width="15" height="1" fill="#fff"/><rect x="0" y="0" width="1" height="13" fill="#fff"/>
   <rect x="15" y="0" width="1" height="14" fill="#000"/><rect x="0" y="13" width="16" height="1" fill="#000"/>
   <rect x="14" y="1" width="1" height="12" fill="#808080"/><rect x="1" y="12" width="14" height="1" fill="#808080"/>
  </g><g transform="translate(34 0)">
   <rect x="0" y="0" width="16" height="14" fill="#c0c0c0"/>
   <rect x="0" y="0" width="15" height="1" fill="#fff"/><rect x="0" y="0" width="1" height="13" fill="#fff"/>
   <rect x="15" y="0" width="1" height="14" fill="#000"/><rect x="0" y="13" width="16" height="1" fill="#000"/>
   <rect x="14" y="1" width="1" height="12" fill="#808080"/><rect x="1" y="12" width="14" height="1" fill="#808080"/>
  </g>
   <rect x="5" y="2" width="6" height="2" fill="#000"/><rect x="5" y="2" width="1" height="4" fill="#000"/><rect x="10" y="2" width="1" height="5" fill="#000"/><rect x="9" y="6" width="2" height="1" fill="#000"/>
   <rect x="3" y="5" width="6" height="2" fill="#000"/><rect x="3" y="5" width="1" height="6" fill="#000"/><rect x="8" y="5" width="1" height="6" fill="#000"/><rect x="3" y="10" width="6" height="1" fill="#000"/>
   <rect x="19" y="2" width="9" height="2" fill="#000"/><rect x="19" y="2" width="1" height="9" fill="#000"/><rect x="27" y="2" width="1" height="9" fill="#000"/><rect x="19" y="10" width="9" height="1" fill="#000"/>
   <path fill="#000" d="M38 3h2v1h1v1h2v-1h1v-1h2v1h-1v1h-1v1h-1v1h1v1h1v1h1v1h-2v-1h-1v-1h-2v1h-1v1h-2v-1h1v-1h1v-1h1v-1h-1v-1h-1v-1h-1z"/>
  </g>
 <g transform="translate(429 503)">
   <g transform="translate(0 0)">
   <rect x="0" y="0" width="16" height="14" fill="#c0c0c0"/>
   <rect x="0" y="0" width="15" height="1" fill="#fff"/><rect x="0" y="0" width="1" height="13" fill="#fff"/>
   <rect x="15" y="0" width="1" height="14" fill="#000"/><rect x="0" y="13" width="16" height="1" fill="#000"/>
   <rect x="14" y="1" width="1" height="12" fill="#808080"/><rect x="1" y="12" width="14" height="1" fill="#808080"/>
  </g><g transform="translate(16 0)">
   <rect x="0" y="0" width="16" height="14" fill="#c0c0c0"/>
   <rect x="0" y="0" width="15" height="1" fill="#fff"/><rect x="0" y="0" width="1" height="13" fill="#fff"/>
   <rect x="15" y="0" width="1" height="14" fill="#000"/><rect x="0" y="13" width="16" height="1" fill="#000"/>
   <rect x="14" y="1" width="1" height="12" fill="#808080"/><rect x="1" y="12" width="14" height="1" fill="#808080"/>
  </g><g transform="translate(34 0)">
   <rect x="0" y="0" width="16" height="14" fill="#c0c0c0"/>
   <rect x="0" y="0" width="15" height="1" fill="#fff"/><rect x="0" y="0" width="1" height="13" fill="#fff"/>
   <rect x="15" y="0" width="1" height="14" fill="#000"/><rect x="0" y="13" width="16" height="1" fill="#000"/>
   <rect x="14" y="1" width="1" height="12" fill="#808080"/><rect x="1" y="12" width="14" height="1" fill="#808080"/>
  </g>
   <rect x="5" y="2" width="6" height="2" fill="#000"/><rect x="5" y="2" width="1" height="4" fill="#000"/><rect x="10" y="2" width="1" height="5" fill="#000"/><rect x="9" y="6" width="2" height="1" fill="#000"/>
   <rect x="3" y="5" width="6" height="2" fill="#000"/><rect x="3" y="5" width="1" height="6" fill="#000"/><rect x="8" y="5" width="1" height="6" fill="#000"/><rect x="3" y="10" width="6" height="1" fill="#000"/>
   <rect x="19" y="2" width="9" height="2" fill="#000"/><rect x="19" y="2" width="1" height="9" fill="#000"/><rect x="27" y="2" width="1" height="9" fill="#000"/><rect x="19" y="10" width="9" height="1" fill="#000"/>
   <path fill="#000" d="M38 3h2v1h1v1h2v-1h1v-1h2v1h-1v1h-1v1h-1v1h1v1h1v1h1v1h-2v-1h-1v-1h-2v1h-1v1h-2v-1h1v-1h1v-1h1v-1h-1v-1h-1v-1h-1z"/>
  </g>
 <g transform="translate(589 503)">
   <g transform="translate(0 0)">
   <rect x="0" y="0" width="16" height="14" fill="#c0c0c0"/>
   <rect x="0" y="0" width="15" height="1" fill="#fff"/><rect x="0" y="0" width="1" height="13" fill="#fff"/>
   <rect x="15" y="0" width="1" height="14" fill="#000"/><rect x="0" y="13" width="16" height="1" fill="#000"/>
   <rect x="14" y="1" width="1" height="12" fill="#808080"/><rect x="1" y="12" width="14" height="1" fill="#808080"/>
  </g><g transform="translate(16 0)">
   <rect x="0" y="0" width="16" height="14" fill="#c0c0c0"/>
   <rect x="0" y="0" width="15" height="1" fill="#fff"/><rect x="0" y="0" width="1" height="13" fill="#fff"/>
   <rect x="15" y="0" width="1" height="14" fill="#000"/><rect x="0" y="13" width="16" height="1" fill="#000"/>
   <rect x="14" y="1" width="1" height="12" fill="#808080"/><rect x="1" y="12" width="14" height="1" fill="#808080"/>
  </g><g transform="translate(34 0)">
   <rect x="0" y="0" width="16" height="14" fill="#c0c0c0"/>
   <rect x="0" y="0" width="15" height="1" fill="#fff"/><rect x="0" y="0" width="1" height="13" fill="#fff"/>
   <rect x="15" y="0" width="1" height="14" fill="#000"/><rect x="0" y="13" width="16" height="1" fill="#000"/>
   <rect x="14" y="1" width="1" height="12" fill="#808080"/><rect x="1" y="12" width="14" height="1" fill="#808080"/>
  </g>
   <rect x="5" y="2" width="6" height="2" fill="#000"/><rect x="5" y="2" width="1" height="4" fill="#000"/><rect x="10" y="2" width="1" height="5" fill="#000"/><rect x="9" y="6" width="2" height="1" fill="#000"/>
   <rect x="3" y="5" width="6" height="2" fill="#000"/><rect x="3" y="5" width="1" height="6" fill="#000"/><rect x="8" y="5" width="1" height="6" fill="#000"/><rect x="3" y="10" width="6" height="1" fill="#000"/>
   <rect x="19" y="2" width="9" height="2" fill="#000"/><rect x="19" y="2" width="1" height="9" fill="#000"/><rect x="27" y="2" width="1" height="9" fill="#000"/><rect x="19" y="10" width="9" height="1" fill="#000"/>
   <path fill="#000" d="M38 3h2v1h1v1h2v-1h1v-1h2v1h-1v1h-1v1h-1v1h1v1h1v1h1v1h-2v-1h-1v-1h-2v1h-1v1h-2v-1h1v-1h1v-1h1v-1h-1v-1h-1v-1h-1z"/>
  </g>
 <!-- iterations icon -->
 <g fill="#c0c0c0"><rect x="330" y="502" width="16" height="15"/></g>
 <g fill="#000"><rect x="330" y="506" width="16" height="1"/><rect x="330" y="511" width="16" height="1"/><rect x="335" y="502" width="1" height="15"/></g>
 <g fill="#fff"><rect x="331" y="507" width="15" height="1"/><rect x="331" y="512" width="15" height="1"/><rect x="336" y="502" width="1" height="15"/></g>
 <!-- graph icon -->
 <rect x="489" y="502" width="16" height="15" fill="#c0c0c0"/>
 <rect x="504" y="502" width="1" height="15" fill="#000"/>
 <rect x="489" y="516" width="16" height="1" fill="#000"/>
 <g fill="#000"><rect x="490" y="517" width="1" height="2"/><rect x="493" y="517" width="1" height="2"/><rect x="496" y="517" width="1" height="2"/><rect x="499" y="517" width="1" height="2"/><rect x="502" y="517" width="1" height="2"/>
 <rect x="489" y="504" width="1" height="1"/><rect x="489" y="507" width="1" height="1"/><rect x="489" y="510" width="1" height="1"/><rect x="489" y="513" width="1" height="1"/></g>
 <path d="M490 508l10 8h-10z" fill="#00ffff"/>
 <path d="M490 506l9 9" stroke="#ff00ff" fill="none" shape-rendering="auto"/>
 <g fill="#0000ff"><rect x="491" y="504" width="1" height="1"/><rect x="493" y="507" width="1" height="1"/><rect x="490" y="508" width="1" height="1"/><rect x="492" y="509" width="1" height="1"/><rect x="495" y="510" width="1" height="1"/><rect x="497" y="513" width="1" height="1"/><rect x="500" y="514" width="1" height="1"/><rect x="502" y="515" width="1" height="1"/></g>
</svg>
<div class="t mt" style="left:27px;top:505px;letter-spacing:0.65px">Ranging</div>
<div class="t mt" style="left:187px;top:505px">Solution I...</div>
<div class="t mt" style="left:347px;top:505px">Iterations</div>
<div class="t mt" style="left:507px;top:505px">Graph</div>
<!-- status bar -->
<div class="a" style="left:4px;top:522px;width:800px;height:27px;background:#c0c0c0;border-top:1px solid #808080;border-left:1px solid #808080;box-shadow:inset 1px 1px #000"></div>
<div class="sp" style="left:6px;width:400px"></div>
<div class="sp" style="left:406px;width:200px"></div>
<div class="sp" style="left:606px;width:198px"></div>
<div class="t" style="left:8px;top:531px;font-size:14px;line-height:14px;letter-spacing:-0.33px">Linear Programming</div>
<div class="t" style="left:407px;top:531px;font-size:14px;line-height:14px;letter-spacing:-0.26px">Solution Screen</div>
<div class="t" style="left:608px;top:531px;font-size:14px;line-height:14px;letter-spacing:-0.45px">Lisa B. Ernest</div>
<!-- bottom toolbar -->
<div class="a" style="left:4px;top:549px;width:640px;height:27px;border-top:1px solid #fff;border-left:1px solid #fff;border-right:1px solid #808080;border-bottom:1px solid #808080"></div>
<div class="a" style="left:4px;top:577px;width:800px;height:1px;background:#fff"></div>
<div class="grip" style="left:8px;top:552px;height:22px"></div>
<svg class="a" style="left:0;top:551px" width="660" height="26" viewBox="0 551 660 26" shape-rendering="crispEdges">
 <!-- module icon -->
 <g fill="#000"><rect x="19" y="555" width="3" height="5"/><rect x="18" y="556" width="5" height="3"/><rect x="30" y="555" width="4" height="4"/><rect x="27" y="556" width="1" height="5"/><rect x="25" y="557" width="2" height="3"/>
 <rect x="22" y="563" width="10" height="1"/><rect x="22" y="563" width="1" height="7"/><rect x="22" y="569" width="9" height="1"/><rect x="29" y="564" width="1" height="6"/><rect x="31" y="562" width="1" height="7"/><rect x="30" y="562" width="2" height="1"/>
 <rect x="21" y="561" width="1" height="1"/><rect x="20" y="562" width="1" height="1"/><rect x="21" y="563" width="1" height="1"/><rect x="23" y="561" width="1" height="1"/></g>
 <g fill="#0000ff"><rect x="19" y="556" width="3" height="3"/></g>
 <rect x="31" y="556" width="2" height="2" fill="#c00000"/>
 <rect x="26" y="558" width="1" height="1" fill="#00c000"/><rect x="25" y="558" width="1" height="1" fill="#fff"/>
 <rect x="23" y="564" width="6" height="5" fill="#ffff00"/>
 <g fill="#fff"><rect x="24" y="565" width="1" height="1"/><rect x="26" y="565" width="1" height="1"/><rect x="28" y="565" width="1" height="1"/><rect x="25" y="566" width="1" height="1"/><rect x="27" y="566" width="1" height="1"/><rect x="24" y="567" width="1" height="1"/><rect x="26" y="567" width="1" height="1"/><rect x="28" y="567" width="1" height="1"/></g>
 <rect x="30" y="564" width="1" height="4" fill="#c0c000"/>
 <!-- sep -->
 <rect x="88" y="554" width="1" height="20" fill="#808080"/><rect x="89" y="554" width="1" height="20" fill="#fff"/>
 <!-- print screen icon -->
 <rect x="96" y="555" width="16" height="15" rx="2" fill="#00c8c8" stroke="#000" stroke-width="0"/>
 <rect x="96.5" y="555.5" width="15" height="14" rx="2" fill="none" stroke="#000"/>
 <path d="M100.5 557.5h7v3h-7z" fill="#fff" stroke="#000"/>
 <path d="M98.5 560.5h11v5h-11z" fill="#c0c0c0" stroke="#000"/>
 <rect x="99" y="566" width="10" height="2" fill="#000"/>
 <rect x="103" y="562" width="3" height="1" fill="#ffff00"/>
 <!-- sep -->
 <rect x="196" y="554" width="1" height="20" fill="#808080"/><rect x="197" y="554" width="1" height="20" fill="#fff"/>
 <!-- next file dis icon -->
 <defs><pattern id="dith" width="2" height="2" patternUnits="userSpaceOnUse"><rect width="2" height="2" fill="#808080"/><rect width="1" height="1" fill="#fff"/><rect x="1" y="1" width="1" height="1" fill="#fff"/></pattern></defs>
 <path d="M214 555l6 6v9h-6z" fill="#808080"/>
 <path d="M207 559h6l1 1v4h-9v-3z" fill="#808080"/><rect x="207" y="561" width="6" height="3" fill="url(#dith)"/>
 <rect x="204" y="564" width="13" height="7" fill="#808080"/><rect x="205" y="566" width="11" height="4" fill="url(#dith)"/>
 <rect x="205" y="565" width="10" height="1" fill="#fff"/>
 <rect x="207" y="571" width="14" height="1" fill="#fff"/><rect x="220" y="561" width="1" height="10" fill="#fff"/>
 <rect x="217" y="563" width="1" height="1" fill="#fff"/><rect x="217" y="565" width="1" height="1" fill="#fff"/>
 <!-- sep -->
 <rect x="279" y="554" width="1" height="20" fill="#808080"/><rect x="280" y="554" width="1" height="20" fill="#fff"/>
 <!-- prev icon -->
 <path d="M289 562h5l1 1h7v6h-13z" fill="#ffff80" stroke="#000" stroke-width="0"/>
 <path d="M288.5 562.5v7h13l2-5h-11l-2 5" fill="#c8c800" stroke="#000"/>
 <path d="M287 559l4-4v2.5h3v3h-3v2.5z" fill="#000"/>
 <!-- sep -->
 <rect x="385" y="554" width="1" height="20" fill="#808080"/><rect x="386" y="554" width="1" height="20" fill="#fff"/>
 <!-- excel dis icon -->
 <rect x="392" y="556" width="15" height="12" fill="#808080"/>
 <g fill="#c0c0c0"><rect x="394" y="559" width="2" height="2"/><rect x="397" y="559" width="2" height="2"/><rect x="394" y="562" width="2" height="2"/><rect x="397" y="562" width="2" height="2"/><rect x="394" y="565" width="2" height="2"/><rect x="397" y="565" width="2" height="2"/></g>
 <rect x="393" y="568" width="15" height="1" fill="#fff"/><rect x="407" y="557" width="1" height="12" fill="#fff"/>
 <!-- sep -->
 <rect x="523" y="554" width="1" height="20" fill="#808080"/><rect x="524" y="554" width="1" height="20" fill="#fff"/>
 <!-- globe -->
 <g shape-rendering="auto"><circle cx="539" cy="563" r="6.5" fill="#000"/><circle cx="539" cy="563" r="5.8" fill="#0000ff"/><path d="M535 558.5c2 0.5 3 2 2.5 4s1 3 1.5 4.5c-2 0-3.5-1.5-4.5-3.5-0.5-2-0.5-3.5 0.5-5zM539.5 557.5c2.5 0 4 1.5 4.5 3-1.5 0.5-2.5 1-2.5 2.5s1.5 2 1.5 3c-1 1-2 1.5-2.5 1.5 0-2-1.5-3-1-4.5s-1-3.5 0-5.5z" fill="#00a000"/><circle cx="536.5" cy="560.5" r="1.2" fill="#80ff80" opacity="0.6"/></g>
</svg>
<div class="t" style="left:38px;top:556px;font-size:14px;line-height:14px;letter-spacing:-0.6px">Module</div>
<div class="t" style="left:116px;top:556px;font-size:14px;line-height:14px;letter-spacing:-0.35px">Print Screen</div>
<div class="t dis" style="left:224px;top:556px;font-size:14px;line-height:14px;letter-spacing:-0.33px">Next file</div>
<div class="t" style="left:307px;top:556px;font-size:14px;line-height:14px;letter-spacing:-0.53px">Previous file</div>
<div class="t dis" style="left:412px;top:556px;font-size:14px;line-height:14px;letter-spacing:-0.39px">Save as Excel file</div>
<div class="t" style="left:550px;top:556px;font-size:14px;line-height:14px;letter-spacing:-0.63px">Save as HTML</div>

<div class="a" style="left:803px;top:106px;width:1px;height:474px;background:#fff"></div>
<div class="a" style="left:804px;top:0;width:1px;height:580px;background:#300030"></div>
<div class="a" style="left:163px;top:569px;width:4px;height:1px;background:#000"></div>
</body></html>
